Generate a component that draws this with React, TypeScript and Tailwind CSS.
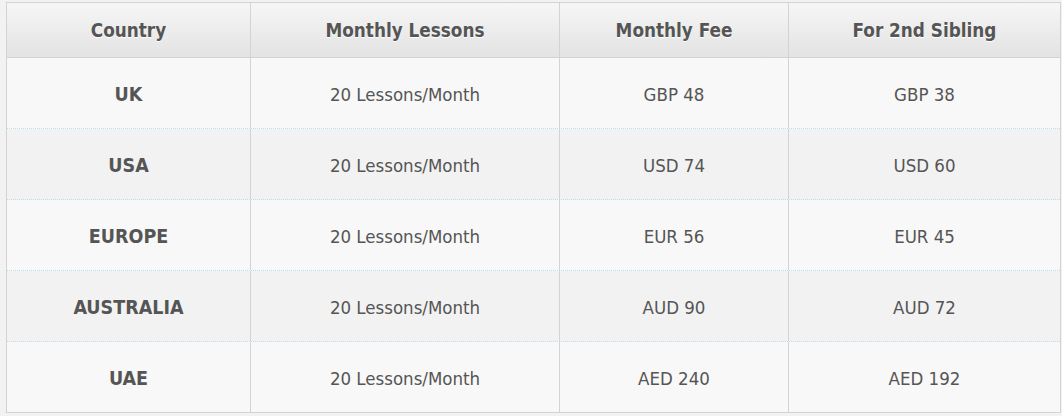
import React from "react";

const rows = [
  ["UK", "20 Lessons/Month", "GBP 48", "GBP 38"],
  ["USA", "20 Lessons/Month", "USD 74", "USD 60"],
  ["EUROPE", "20 Lessons/Month", "EUR 56", "EUR 45"],
  ["AUSTRALIA", "20 Lessons/Month", "AUD 90", "AUD 72"],
  ["UAE", "20 Lessons/Month", "AED 240", "AED 192"],
];

const headers = ["Country", "Monthly Lessons", "Monthly Fee", "For 2nd Sibling"];

export default function App() {
  return (
    <div
      className="w-[1062px] h-[416px] bg-[#f2f2f2] pt-[2px] pl-[6px]"
      style={{ fontFamily: '"DejaVu Sans Condensed", "DejaVu Sans", sans-serif' }}
    >
      <div className="w-[1055px] border border-[#d3d3d3] text-[#555555]">
        <div className="grid grid-cols-[243px_309px_229px_1fr] h-[55px] border-b border-[#d3d3d3] bg-gradient-to-b from-[#f6f6f6] to-[#e3e3e3]">
          {headers.map((h, i) => (
            <div
              key={h}
              className={`flex items-center justify-center pt-[2px] font-bold text-[18.75px] [text-shadow:0_1px_0_#ffffff] ${i > 0 ? "border-l border-[#d3d3d3]" : ""}`}
            >
              {h}
            </div>
          ))}
        </div>
        {rows.map((r, ri) => (
          <div
            key={ri}
            className={`grid grid-cols-[243px_309px_229px_1fr] ${ri < rows.length - 1 ? "h-[71px] border-b border-dotted border-[#b8e0ef]" : "h-[70px]"} ${ri % 2 === 0 ? "bg-[#f8f8f8]" : "bg-[#f2f2f2]"}`}
          >
            {r.map((c, ci) => (
              <div
                key={ci}
                className={`flex items-center justify-center pt-[3px] ${ci === 0 ? "font-bold text-[19.5px]" : "text-[18.5px]"} ${ci > 0 ? "border-l border-[#d3d3d3]" : ""}`}
              >
                {c}
              </div>
            ))}
          </div>
        ))}
      </div>
    </div>
  );
}
